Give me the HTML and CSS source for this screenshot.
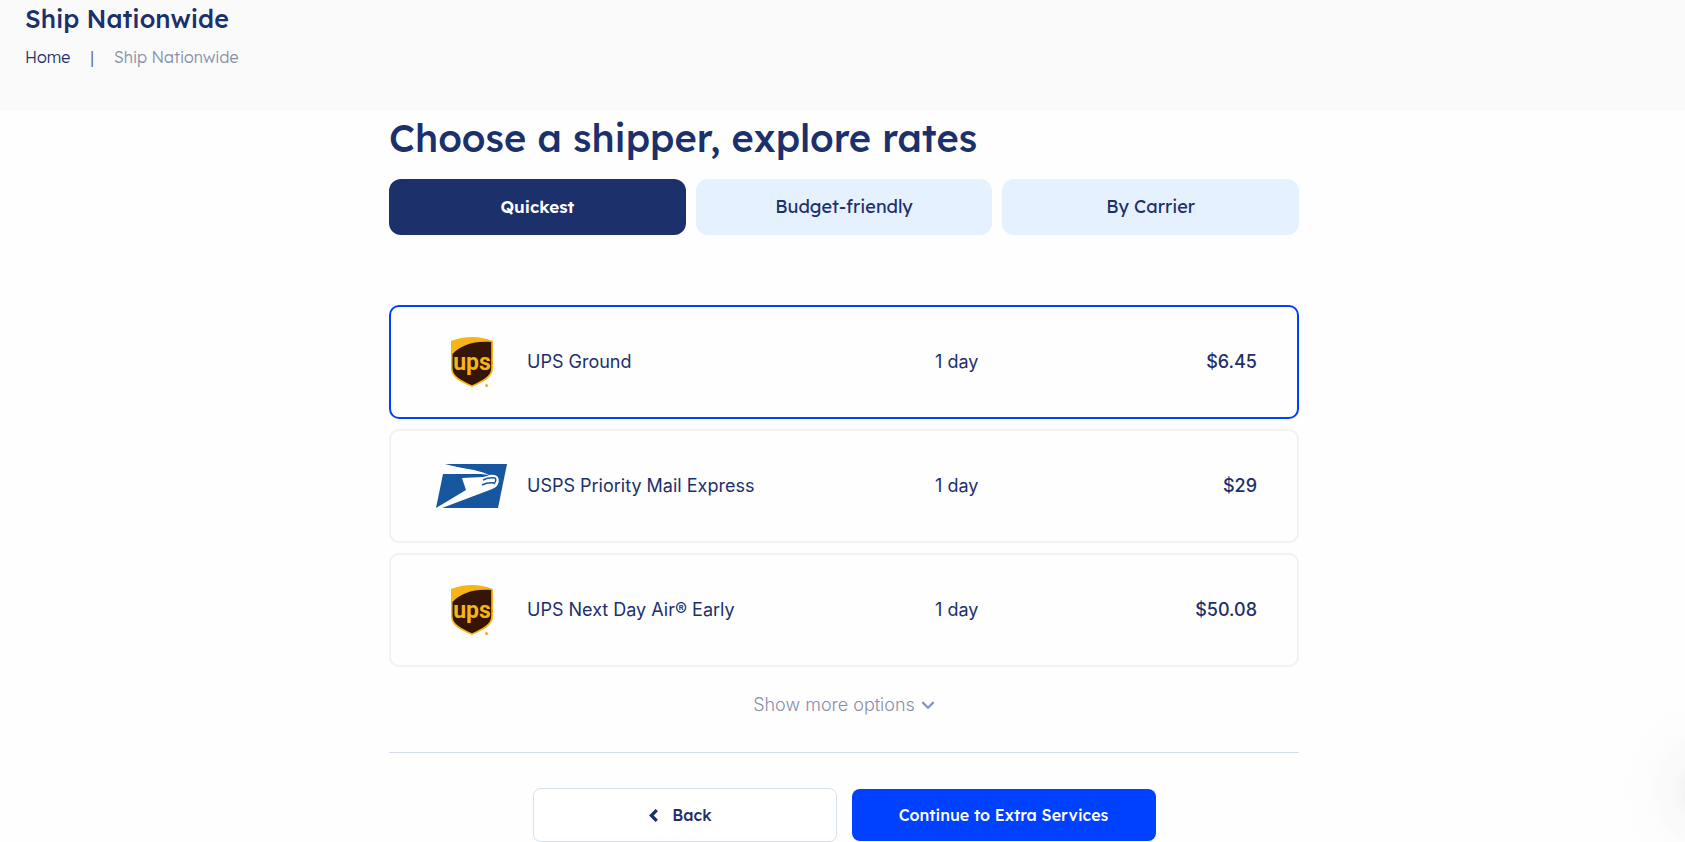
FILE: index.html
```html
<!DOCTYPE html>
<html lang="en">
<head>
<meta charset="utf-8">
<meta name="viewport" content="width=device-width, initial-scale=1">
<title>Ship Nationwide</title>
<link rel="stylesheet" href="styles.css">
</head>
<body>
<svg class="defs" aria-hidden="true">
  <symbol id="ups" viewBox="0 0 42 50">
    <path fill="#f5b516" d="M0 4Q21-4 42 4V31C42 41 32 45 21 50C10 45 0 41 0 31Z"/>
    <path fill="#351506" d="M1.500 17C10 8 23 3.500 40.200 5V31C40.200 39.500 32 43 21 48.300C10 43 1.500 39.500 1.500 31Z"/>
    <text class="ups-word" x="21" y="33" text-anchor="middle">ups</text>
    <circle cx="35.500" cy="48.500" r="1.500" fill="#eda63a"/>
  </symbol>
</svg>
<header class="page-header">
  <h1 class="page-title">Ship Nationwide</h1>
  <nav class="breadcrumbs" aria-label="Breadcrumb">
    <a class="crumb" href="#">Home</a>
    <span class="separator">|</span>
    <span class="current">Ship Nationwide</span>
  </nav>
</header>
<main class="content">
  <form class="shipper">
    <h2 class="heading">Choose a shipper, explore rates</h2>
    <div class="tabs">
      <button class="tab tab-active" type="button">Quickest</button>
      <button class="tab" type="button">Budget-friendly</button>
      <button class="tab" type="button">By Carrier</button>
    </div>
    <div class="rates">
      <label class="rate">
        <input class="rate-input" type="radio" name="rate" checked>
        <span class="logo"><svg class="ups" role="img" aria-label="UPS logo"><use href="#ups"/></svg></span>
        <span class="service">UPS Ground</span>
        <span class="time">1 day</span>
        <span class="price">$6.45</span>
      </label>
      <label class="rate">
        <input class="rate-input" type="radio" name="rate">
        <span class="logo"><svg class="usps" viewBox="0 0 71 44" role="img" aria-label="USPS logo">
          <path fill="#16579f" d="M9 0H71L62 44H0L7 10H49Z"/>
          <path fill="#fff" d="M8 0L9 1L38 6Q50 9 53 11Q58 10 61 12C64 15 63 20 60 23Q57 25 51 27L6 44H0L30 26L26 14L47 13Q52 12 53 11L45 10H6L8 0Z"/>
          <path fill="none" stroke="#16579f" stroke-width="1.400" d="M47 16Q53 13 59 14Q61 16 58 20M46 21Q52 18 58 19"/>
        </svg></span>
        <span class="service">USPS Priority Mail Express</span>
        <span class="time">1 day</span>
        <span class="price">$29</span>
      </label>
      <label class="rate">
        <input class="rate-input" type="radio" name="rate">
        <span class="logo"><svg class="ups" role="img" aria-label="UPS logo"><use href="#ups"/></svg></span>
        <span class="service">UPS Next Day Air® Early</span>
        <span class="time">1 day</span>
        <span class="price">$50.08</span>
      </label>
    </div>
    <button class="more" type="button">Show more options
      <svg class="chevron-down" viewBox="0 0 12 8" aria-hidden="true"><path d="M1 1L6 6L11 1"/></svg>
    </button>
    <div class="actions">
      <button class="action back" type="button"><svg class="chevron-left" viewBox="0 0 8 12" aria-hidden="true"><path d="M7 1L2 6L7 11"/></svg>Back</button>
      <button class="action continue" type="submit">Continue to Extra Services</button>
    </div>
  </form>
</main>
<div class="glow" aria-hidden="true"></div>
</body>
</html>
```
FILE: styles.css
```css
* { box-sizing: border-box; }
body {
  margin: 0;
  color: #1c306c;
  background: #fefefe;
  font-family: Inter, "Liberation Sans", sans-serif;
  font-size: 18px;
  line-height: 20px;
}
button { font: inherit; color: inherit; cursor: pointer; }
.defs { display: none; }
.page-header {
  height: 111px;
  padding: 3px 25px;
  background: #fafafa;
  font-family: Lexend, Inter, sans-serif;
}
.page-title { margin: 0; font-size: 25px; line-height: 32px; font-weight: 500; }
.breadcrumbs {
  display: flex;
  gap: 20px;
  margin-top: 10px;
  font-size: 16px;
  line-height: 24px;
  font-weight: 300;
}
.crumb { color: inherit; text-decoration: none; }
.separator { color: #555b70; }
.current { color: #8890a8; }
.content { padding: 0 22px 0 25px; }
.shipper { max-width: 910px; margin: 0 auto; }
.heading {
  margin: 0;
  padding: 3px 0 17px;
  font: 500 38px/48px Lexend, Inter, sans-serif;
}
.tabs { display: grid; grid-template-columns: repeat(3, 1fr); gap: 10px; }
.tab {
  height: 56px;
  border: 0;
  border-radius: 12px;
  background: #e5f1fe;
  font: 400 18px/24px Lexend, Inter, sans-serif;
}
.tab-active { background: #1c306c; color: #fff; font-size: 17px; font-weight: 600; }
.rates { display: grid; gap: 10px; margin-top: 70px; }
.rate {
  display: grid;
  grid-template-columns: 71px 1fr 114px 208px;
  align-items: center;
  height: 114px;
  padding: 0 40px 0 45px;
  border: 2px solid #f2f2f3;
  border-radius: 10px;
  cursor: pointer;
}
.rate:has(:checked) { border-color: #0040ff; }
.rate-input { position: absolute; opacity: 0; pointer-events: none; }
.logo { display: flex; justify-content: center; }
.ups { width: 42px; height: 50px; }
.ups-word {
  font: 700 23px Roboto, "Liberation Sans", sans-serif;
  fill: #f5b516;
}
.usps { width: 71px; height: 44px; }
.service { padding-left: 20px; }
.price { text-align: right; font-weight: 500; }
.more {
  display: flex;
  align-items: center;
  gap: 6px;
  margin: 24px auto 33px;
  padding: 0;
  border: 0;
  background: none;
  color: #898fa8;
  font-weight: 300;
  line-height: 28px;
}
.chevron-down { width: 14px; height: 9px; fill: none; stroke: #8295c4; stroke-width: 2; }
.actions {
  display: flex;
  justify-content: center;
  align-items: center;
  gap: 15px;
  padding-top: 35px;
  border-top: 1px solid #d6deed;
}
.action {
  display: flex;
  align-items: center;
  justify-content: center;
  flex: 0 1 304px;
  height: 52px;
  border: 0;
  border-radius: 8px;
  font: 500 16px/24px Lexend, Inter, sans-serif;
}
.back { gap: 14px; height: 54px; padding-right: 14px; border: 1px solid #d6e1ee; background: #fff; }
.chevron-left { width: 9px; height: 13px; fill: none; stroke: #1c306c; stroke-width: 3; }
.continue { background: #0040ff; color: #fff; }
.glow {
  position: fixed;
  right: -124px;
  bottom: -44px;
  width: 192px;
  height: 192px;
  border-radius: 50%;
  background: radial-gradient(closest-side, #f4f4f4 30%, #f9f9f9 40%, #fafafa 58%, #fcfcfc 64%, #fefefe);
  pointer-events: none;
}
```
